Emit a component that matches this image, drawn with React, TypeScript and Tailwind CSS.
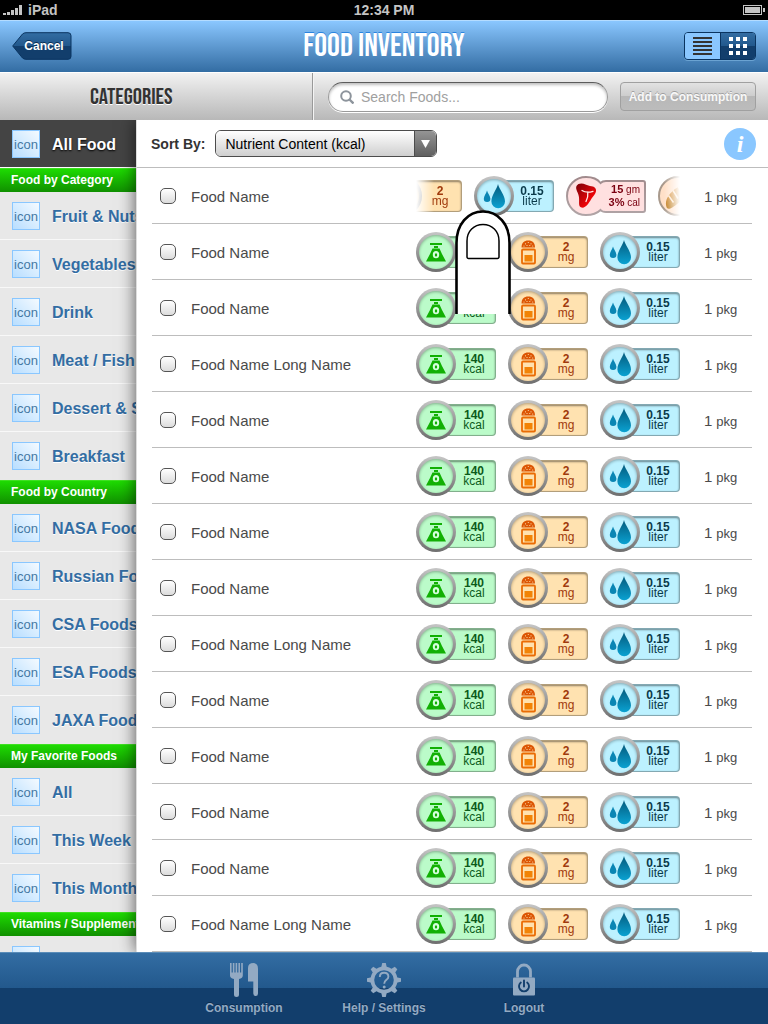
import React from "react";

type BadgeKind = "energy" | "salt" | "water" | "meat" | "bread";

const badgeStyle: Record<BadgeKind, { fill: string; text: string; top: string; bottom: string }> = {
  energy: { fill: "bg-[#bbfbc9]", text: "text-[#0b5a1a]", top: "140", bottom: "kcal" },
  salt: { fill: "bg-[#ffe2b0]", text: "text-[#a03a0c]", top: "2", bottom: "mg" },
  water: { fill: "bg-[#bcf1ff]", text: "text-[#0a3a4a]", top: "0.15", bottom: "liter" },
  meat: { fill: "bg-[#ffe0e0]", text: "text-[#7a0010]", top: "15", bottom: "cal" },
  bread: { fill: "bg-[#ffe0c8]", text: "text-[#7a4a10]", top: "8", bottom: "gm" },
};

function EnergyIcon() {
  return (
    <svg viewBox="0 0 34 34" className="size-[34px]" aria-hidden="true">
      <path d="M11 8h12v2H11zM15 11h4v2h-4zM13.500 13.500h7L23 19l4 7.500H7L11 19z" fill="#12b004" />
      <ellipse cx="17" cy="19.700" rx="3.200" ry="3.600" fill="#d6ffdd" />
      <ellipse cx="17" cy="19.900" rx="1.200" ry="1.700" fill="#12b004" />
    </svg>
  );
}

function SaltIcon() {
  return (
    <svg viewBox="0 0 34 34" className="size-[34px]" aria-hidden="true">
      <path d="M10.500 12.500C10.500 8 13 5.500 17.300 5.500S24 8 24 12.500z" fill="#dc5504" />
      <g fill="#ffe2b0">
        <circle cx="14.500" cy="8.800" r=".6" />
        <circle cx="17.300" cy="7.500" r=".6" />
        <circle cx="20" cy="8.800" r=".6" />
        <circle cx="13" cy="11" r=".6" />
        <circle cx="16" cy="10.500" r=".6" />
        <circle cx="18.800" cy="10.500" r=".6" />
        <circle cx="21.700" cy="11" r=".6" />
      </g>
      <rect x="11" y="14.500" width="13" height="14" rx="1" fill="none" stroke="#ea6c04" strokeWidth="1.800" />
      <rect x="13.500" y="20" width="8" height="6.500" fill="#f28306" />
    </svg>
  );
}

function WaterIcon() {
  return (
    <svg viewBox="0 0 34 34" className="size-[34px]" aria-hidden="true">
      <defs>
        <linearGradient id="waterFill" x1="0" y1="0" x2="0" y2="1">
          <stop offset="0" stopColor="#045a7c" />
          <stop offset="1" stopColor="#0aa2d2" />
        </linearGradient>
      </defs>
      <path d="M21 5c1 5 7 11 7 17.500a6.800 6.800 0 0 1-13.600 0C14.400 16 20 10 21 5z" fill="url(#waterFill)" />
      <path d="M10 11.500c.5 2.500 3.400 5.500 3.400 8.300a3.300 3.300 0 0 1-6.600 0c0-2.800 2.700-5.800 3.200-8.300z" fill="#0a86b4" />
    </svg>
  );
}

function BreadBadge() {
  return (
    <svg viewBox="0 0 80 40" className="h-10 w-20 shrink-0" aria-hidden="true">
      <defs>
        <linearGradient id="loafFill" x1="0" y1="0" x2="0" y2="1">
          <stop offset="0" stopColor="#e8a050" />
          <stop offset="1" stopColor="#b87410" />
        </linearGradient>
      </defs>
      <path
        d="M35 6.500C31.500 3 26 1 20 1a19 19 0 0 0 0 38c6 0 11.500-2 15-5Q36.500 36 40 36H77a2 2 0 0 0 2-2V7a2 2 0 0 0-2-2H39Q36.500 5 35 6.500z"
        fill="#ffe0c8"
        stroke="#a8998c"
        strokeWidth="2"
      />
      <path d="M8.500 31C6 24 12 17 17 13s12-5 14-2-1 8-7 13-14 12-15.500 7z" fill="url(#loafFill)" />
      <path d="M10.500 19.500l5 7M15 14.500l5 8M20.500 11l4.500 8" stroke="#ffe8d0" strokeWidth="1.500" />
    </svg>
  );
}

function MeatBadge() {
  return (
    <div className="grid w-20 shrink-0 text-[#7a0010]">
      <svg viewBox="0 0 80 40" className="col-start-1 row-start-1 h-10 w-20" aria-hidden="true">
        <defs>
          <linearGradient id="steakFill" x1="0" y1="0" x2="1" y2="1">
            <stop offset="0" stopColor="#7a0008" />
            <stop offset=".7" stopColor="#f00408" />
          </linearGradient>
          <linearGradient id="steakRim" x1="0" y1="0" x2="0" y2="1">
            <stop offset="0" stopColor="#a08a8c" />
            <stop offset="1" stopColor="#b0a4a6" />
          </linearGradient>
        </defs>
        <path
          d="M34.500 7C31.500 3 26 1 20 1a19 19 0 0 0 0 38c6 0 11.500-2 14.500-5Q36 36 40 36H77a2 2 0 0 0 2-2V7a2 2 0 0 0-2-2H40Q36.500 5 34.500 7z"
          fill="#ffe0e0"
          stroke="url(#steakRim)"
          strokeWidth="2"
        />
        <path
          d="M10.500 10C12 7 16.500 6.800 19.500 8.500 23 10.500 28.500 9.500 29.800 13c1.200 4-2.300 6.500-4.800 10.500S19.500 32.500 15.500 31.500c-3.500-1-2-5-2.500-10S9 13.500 10.500 10z"
          fill="url(#steakFill)"
        />
        <path
          d="M16 14.500c3 2 6.500 2.200 11 .8M21.800 16c.5 4-.3 6.500-1.800 9.500"
          fill="none"
          stroke="#ffe9e9"
          strokeWidth="1.300"
          strokeLinecap="round"
        />
      </svg>
      <p className="col-start-1 row-start-1 flex flex-col justify-center pr-1.5 text-right text-[10px] leading-3">
        <span>
          <b className="text-[11px]">15</b> gm
        </span>
        <span>
          <b className="text-[11px]">3%</b> cal
        </span>
      </p>
    </div>
  );
}

function Badge({ kind }: { kind: BadgeKind }) {
  if (kind === "meat") return <MeatBadge />;
  if (kind === "bread") return <BreadBadge />;
  const s = badgeStyle[kind];
  return (
    <div className={"flex h-10 w-20 shrink-0 items-center " + s.text}>
      <div className="relative size-10 shrink-0 rounded-full bg-linear-to-b from-[#c6c6c6] to-[#6e6e6e] p-[3px]">
        <div className={"rounded-full shadow-[inset_0_1px_3px_rgba(0,0,0,0.3)] " + s.fill}>
          {kind === "energy" && <EnergyIcon />}
          {kind === "salt" && <SaltIcon />}
          {kind === "water" && <WaterIcon />}
        </div>
      </div>
      <p
        className={
          "-ml-3 flex h-8 flex-1 flex-col items-center justify-center rounded-[4px] border border-black/30 pl-2 text-xs leading-[10px] shadow-[inset_0_1px_2px_rgba(0,0,0,0.45)] " +
          s.fill
        }
      >
        <b>{s.top}</b>
        <span>{s.bottom}</span>
      </p>
    </div>
  );
}

function Finger() {
  return (
    <svg
      viewBox="0 0 56 104"
      className="pointer-events-none absolute top-[42px] right-[241px] z-10 h-[104px] w-14"
      aria-hidden="true"
    >
      <path d="M1.500 104V33C1.500 14 13 1.500 28 1.500S54.500 14 54.500 33v71" fill="#fff" stroke="#000" strokeWidth="2.600" />
      <path
        d="M12 47V31c0-10 7-16.500 16-16.500S44 21 44 31v16a1.500 1.500 0 0 1-1.500 1.500h-29A1.500 1.500 0 0 1 12 47z"
        fill="#fff"
        stroke="#000"
        strokeWidth="1.500"
      />
    </svg>
  );
}

const defaultBadges: BadgeKind[] = ["energy", "salt", "water"];
const scrolledBadges: BadgeKind[] = ["salt", "water", "meat", "bread"];

const foods = Array.from({ length: 14 }, (_, i) => ({
  id: "food-" + i,
  name: i === 3 || i === 8 || i === 13 ? "Food Name Long Name" : "Food Name",
  scrolled: i === 0,
}));

function FoodRow({ id, name, scrolled }: { id: string; name: string; scrolled: boolean }) {
  return (
    <li className="relative flex h-14 shrink-0 items-center border-b border-[#bdbdbd] pr-4 pl-2 text-[#4a4a4a]">
      <input
        id={id}
        type="checkbox"
        className="size-4 appearance-none rounded-[5px] border border-[#555] bg-linear-to-b from-white to-[#dcdcdc] checked:to-[#8ac7ff]"
      />
      <label htmlFor={id} className="flex-1 pt-1 pl-[15px] text-[15px]">
        {name}
      </label>
      <div
        className={
          "w-[264px] overflow-hidden " +
          (scrolled
            ? "[mask-image:linear-gradient(to_right,transparent,#000_18px,#000_248px,transparent)]"
            : "")
        }
      >
        <div className={"flex gap-3 " + (scrolled ? "-ml-[34px]" : "")}>
          {(scrolled ? scrolledBadges : defaultBadges).map((kind) => (
            <Badge key={kind} kind={kind} />
          ))}
        </div>
      </div>
      <p className="ml-6 flex w-8 shrink-0 items-baseline gap-1 pt-1 text-[15px] whitespace-nowrap">
        <span>1</span>
        <span className="text-[13px]">pkg</span>
      </p>
      {scrolled && <Finger />}
    </li>
  );
}

const sections = [
  { title: "Food by Category", items: ["Fruit & Nuts", "Vegetables", "Drink", "Meat / Fish", "Dessert & Snacks", "Breakfast"] },
  { title: "Food by Country", items: ["NASA Foods", "Russian Foods", "CSA Foods", "ESA Foods", "JAXA Foods"] },
  { title: "My Favorite Foods", items: ["All", "This Week", "This Month"] },
  { title: "Vitamins / Supplements", items: ["Vitamins"] },
];

function IconBox() {
  return (
    <span className="flex size-7 shrink-0 items-center justify-center border border-[#8ac7ff] bg-linear-to-tr from-[#b8deff] to-[#f4faff] pt-0.5 text-[13px] font-normal text-[#4579a4] [text-shadow:none]">
      icon
    </span>
  );
}

function Sidebar() {
  return (
    <nav className="w-[136px] shrink-0 overflow-hidden bg-[#e8e8e8] whitespace-nowrap">
      <a
        href="#all"
        className="flex h-12 items-center gap-3 border-b border-white bg-[#444] pl-3 text-base font-bold text-white [text-shadow:0_1px_2px_#000]"
      >
        <IconBox />
        <span className="pt-0.5">All Food</span>
      </a>
      {sections.map((section) => (
        <section key={section.title}>
          <h2 className="h-6 border-t border-[#3fe022] bg-linear-to-b from-[#1edb02] to-[#109000] pl-[11px] text-xs leading-[22px] font-bold text-white">
            {section.title}
          </h2>
          <ul>
            {section.items.map((item) => (
              <li key={item} className="border-b border-[#f8f8f8] last:border-transparent">
                <a
                  href="#category"
                  className="flex h-[47px] items-center gap-3 pl-3 text-base font-bold text-[#336da3] [text-shadow:0_1px_0_#fff]"
                >
                  <IconBox />
                  <span className="pt-0.5">{item}</span>
                </a>
              </li>
            ))}
          </ul>
        </section>
      ))}
    </nav>
  );
}

function StatusBar() {
  return (
    <div className="grid h-5 shrink-0 grid-cols-3 items-center bg-black px-[3px] text-sm font-bold text-[#c4c4c4]">
      <div className="flex items-center gap-[5px]">
        <svg viewBox="0 0 20 10" className="h-2.5 w-5" fill="#c4c4c4" aria-hidden="true">
          <path d="M0 8h3v2H0zM4 7h3v3H4zM8 5h3v5H8zM12 3h3v7h-3zM16 0h3v10h-3z" />
        </svg>
        iPad
      </div>
      <div className="text-center">12:34 PM</div>
      <svg viewBox="0 0 22 10" className="h-2.5 w-[22px] justify-self-end" aria-hidden="true">
        <rect x=".5" y=".5" width="18" height="9" fill="none" stroke="#c4c4c4" />
        <path d="M2 2h15v6H2zM20 3h2v4h-2z" fill="#c4c4c4" />
      </svg>
    </div>
  );
}

function Header() {
  return (
    <header className="grid h-[52px] shrink-0 grid-cols-[1fr_auto_1fr] items-center border-t border-[#b4dcff] bg-linear-to-b from-[#8ac7ff] to-[#336da3] px-3 pb-px">
      <button type="button" className="grid h-7 w-[60px] items-center">
        <svg viewBox="0 0 60 28" className="col-start-1 row-start-1 h-7 w-[60px]" aria-hidden="true">
          <defs>
            <linearGradient id="backFill" x1="0" y1="0" x2="0" y2="1">
              <stop offset="0" stopColor="#336da3" />
              <stop offset=".5" stopColor="#22588c" />
              <stop offset=".5" stopColor="#123e6c" />
              <stop offset="1" stopColor="#123e6c" />
            </linearGradient>
          </defs>
          <path
            d="M.7 14L10.500 2Q12 .7 14 .7H56a3 3 0 0 1 3 3V24.300a3 3 0 0 1-3 3H14q-2 0-3.500-1.300z"
            fill="url(#backFill)"
            stroke="#0a3460"
          />
        </svg>
        <span className="col-start-1 row-start-1 pl-1 text-center text-xs font-bold text-white [text-shadow:0_-1px_0_#0a2c50]">
          Cancel
        </span>
      </button>
      <h1 className="pt-0.5 font-['Bebas_Neue','Liberation_Sans_Narrow','Roboto_Condensed','Liberation_Sans',sans-serif] text-[32px] leading-none font-normal text-white [text-shadow:0_-1px_0_#2a84e0]">
        FOOD INVENTORY
      </h1>
      <div className="flex h-7 w-[72px] overflow-hidden justify-self-end rounded-[4px] border border-[#0a3460] shadow-[0_1px_0_#6ba3d2]">
        <button type="button" aria-label="List view" className="flex flex-1 items-center justify-center bg-[#8ac7ff]">
          <svg viewBox="0 0 19 18" className="h-[18px] w-[19px]" fill="#333" aria-hidden="true">
            <path d="M0 0h19v2H0zM0 4h19v2H0zM0 8h19v2H0zM0 12h19v2H0zM0 16h19v2H0z" />
          </svg>
        </button>
        <button
          type="button"
          aria-label="Grid view"
          className="flex flex-1 items-center justify-center border-l border-[#0a3460] bg-[linear-gradient(#336da3,#22588c_50%,#123e6c_50%,#123e6c)]"
        >
          <svg viewBox="0 0 18 18" className="size-[18px]" fill="#fff" aria-hidden="true">
            <path d="M0 0h4v4H0zM7 0h4v4H7zM14 0h4v4h-4zM0 7h4v4H0zM7 7h4v4H7zM14 7h4v4h-4zM0 14h4v4H0zM7 14h4v4H7zM14 14h4v4h-4z" />
          </svg>
        </button>
      </div>
    </header>
  );
}

function Toolbar() {
  return (
    <div className="relative z-20 flex h-12 shrink-0 items-center border-t border-white bg-linear-to-b from-[#f2f2f2] to-[#b8b8b8] pr-3">
      <div className="flex h-full w-[313px] shrink-0 items-center border-r border-[#999] pl-[90px] shadow-[1px_0_0_#f4f4f4]">
        <h2 className="pt-0.5 font-['Bebas_Neue','Liberation_Sans_Narrow','Roboto_Condensed','Liberation_Sans',sans-serif] text-[23px] leading-none font-normal text-[#333] [text-shadow:0_1px_0_#fff]">
          CATEGORIES
        </h2>
      </div>
      <label className="ml-[15px] flex h-[30px] min-w-0 flex-1 items-center gap-[7px] rounded-full border border-[#9a9a9a] border-t-[#5c5c5c] bg-white px-[11px] shadow-[inset_0_2px_3px_rgba(0,0,0,0.25),0_1px_0_#fff]">
        <svg viewBox="0 0 14 14" className="size-3.5 shrink-0" fill="none" stroke="#8d949c" strokeWidth="2" aria-hidden="true">
          <circle cx="6" cy="6" r="4.800" />
          <path d="M9.500 9.500l4 4" strokeWidth="2.400" />
        </svg>
        <input
          type="search"
          aria-label="Search foods"
          placeholder="Search Foods..."
          className="min-w-0 flex-1 bg-transparent text-sm outline-none placeholder:text-[#a0a0a0]"
        />
      </label>
      <button
        type="button"
        className="ml-3 h-[29px] w-[136px] shrink-0 rounded-[4px] border border-[#a0a0a0] bg-[linear-gradient(#e2e2e2,#cccccc_50%,#b8b8b8_50%,#bcbcbc)] text-xs font-bold whitespace-nowrap text-[#f8f8f8] [text-shadow:0_-1px_0_#a0a0a0]"
      >
        Add to Consumption
      </button>
    </div>
  );
}

function SortBar() {
  return (
    <div className="flex h-12 shrink-0 items-center border-b border-[#bdbdbd] pr-3 pl-[14px]">
      <label htmlFor="sort" className="text-sm font-bold text-[#333]">
        Sort By:
      </label>
      <div className="ml-2.5 grid w-[222px] overflow-hidden rounded-[6px] border border-[#4c4c4c]">
        <select
          id="sort"
          className="col-start-1 row-start-1 h-[25px] appearance-none bg-linear-to-b from-white to-[#cfcfcf] pl-[9px] text-sm text-black outline-none"
        >
          <option>Nutrient Content (kcal)</option>
          <option>Food Name</option>
        </select>
        <span className="pointer-events-none col-start-1 row-start-1 flex w-[22px] items-center justify-center justify-self-end border-l border-[#4c4c4c] bg-linear-to-b from-[#959595] to-[#606060]">
          <svg viewBox="0 0 10 9" className="h-2 w-[9px]" aria-hidden="true">
            <path d="M0 0h10L5 9z" fill="#fff" />
          </svg>
        </span>
      </div>
      <button
        type="button"
        aria-label="Information"
        className="ml-auto size-8 rounded-full bg-[#8ac7ff] font-['Liberation_Serif',serif] text-2xl leading-8 font-bold text-white italic"
      >
        i
      </button>
    </div>
  );
}

function ForkKnifeIcon() {
  return (
    <svg viewBox="0 0 30 34" className="h-[34px] w-[30px]" fill="currentColor" aria-hidden="true">
      <path d="M1 0h1.600v9.500h1.200V0h1.600v9.500h1.200V0h1.600v9.500h1.200V0H11v9.500h1.200V0h1.600v12.500q0 2.500-3.800 3.500v15.500q0 2.500-2.500 2.500T5 31.500V16Q1 15 1 12.500z" />
      <path d="M19 18.500V5q0-5 5.500-5Q29 .5 29 6v24.500q0 2.500-2.300 2.500t-2.400-2.500v-12z" />
    </svg>
  );
}

function GearIcon() {
  const teeth = [0, 45, 90, 135, 180, 225, 270, 315];
  return (
    <svg viewBox="0 0 34 34" className="size-[34px]" aria-hidden="true">
      <g fill="currentColor">
        <path
          fillRule="evenodd"
          d="M17 3.500a13.500 13.500 0 1 0 0 27 13.500 13.500 0 0 0 0-27zm0 3.700a9.800 9.800 0 1 1 0 19.600 9.800 9.800 0 0 1 0-19.600z"
        />
        {teeth.map((angle) => (
          <path key={angle} d="M15.200 0h3.600l1 4.600h-5.600z" transform={"rotate(" + angle + " 17 17)"} />
        ))}
      </g>
      <path
        d="M12.800 14c0-2.800 1.700-4.300 4.300-4.300s4.300 1.500 4.300 4c0 3.300-4.200 3-4.200 7"
        fill="none"
        stroke="currentColor"
        strokeWidth="1.900"
      />
      <circle cx="17.200" cy="24" r="1.500" fill="currentColor" />
    </svg>
  );
}

function LockIcon() {
  return (
    <svg viewBox="0 0 24 34" className="h-[34px] w-6" aria-hidden="true">
      <path d="M5.500 14.500V8.500a6.500 6.500 0 0 1 13 0v6" fill="none" stroke="currentColor" strokeWidth="2.800" />
      <rect x="1" y="14.500" width="22" height="18" rx="1" fill="currentColor" />
      <path
        d="M8.800 19.500a5 5 0 1 0 6.400 0M12 17.500v6"
        fill="none"
        stroke="#123e6c"
        strokeWidth="1.900"
        strokeLinecap="round"
      />
    </svg>
  );
}

const tabs = [
  { label: "Consumption", Icon: ForkKnifeIcon },
  { label: "Help / Settings", Icon: GearIcon },
  { label: "Logout", Icon: LockIcon },
];

export default function App() {
  return (
    <div className="flex h-screen flex-col overflow-hidden bg-white font-['Liberation_Sans',Arial,sans-serif]">
      <StatusBar />
      <Header />
      <Toolbar />
      <div className="flex min-h-0 flex-1">
        <Sidebar />
        <main className="relative flex min-w-0 flex-1 flex-col border-l border-[#ddd] bg-white shadow-[0_0_16px_rgba(0,0,0,0.65)]">
          <SortBar />
          <ul className="mr-4 ml-[15px] flex min-h-0 flex-1 flex-col">
            {foods.map((food) => (
              <FoodRow key={food.id} {...food} />
            ))}
          </ul>
        </main>
      </div>
      <footer className="relative z-20 flex h-[72px] shrink-0 justify-center border-t border-[#5a8cb8] bg-[linear-gradient(#336da3,#22588c_50%,#123e6c_50%,#123e6c)]">
        {tabs.map(({ label, Icon }) => (
          <button
            key={label}
            type="button"
            className="flex w-[140px] flex-col items-center gap-[3px] pt-2.5 text-xs font-bold text-[#93aac3] [text-shadow:0_-1px_0_#0a2c50]"
          >
            <Icon />
            {label}
          </button>
        ))}
      </footer>
    </div>
  );
}
